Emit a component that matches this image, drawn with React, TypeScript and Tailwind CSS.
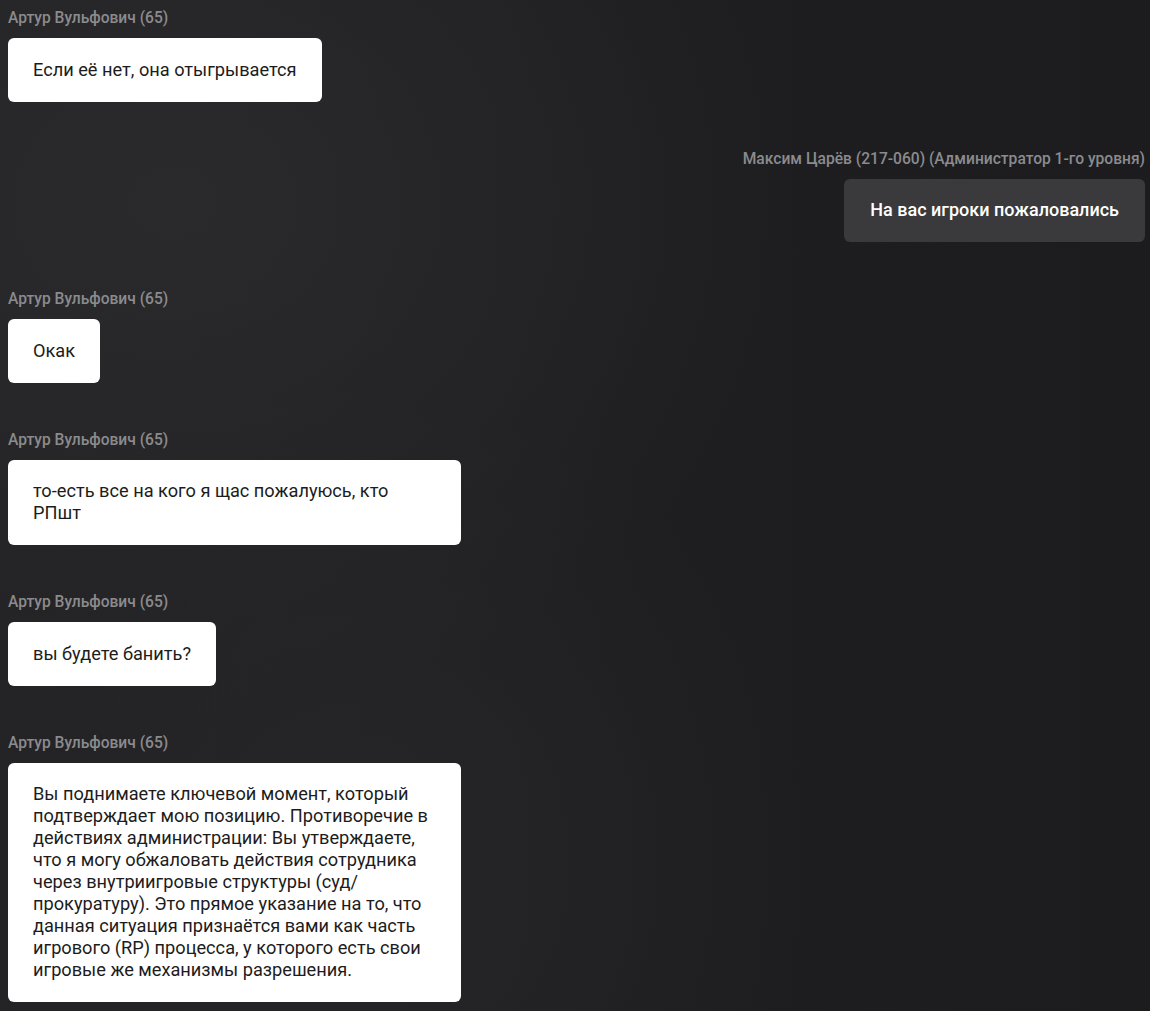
import React from "react";

type Message = {
  author: string;
  text: string;
  own?: boolean;
};

const messages: Message[] = [
  { author: "Артур Вульфович (65)", text: "Если её нет, она отыгрывается" },
  {
    author: "Максим Царёв (217-060) (Администратор 1-го уровня)",
    text: "На вас игроки пожаловались",
    own: true,
  },
  { author: "Артур Вульфович (65)", text: "Окак" },
  { author: "Артур Вульфович (65)", text: "то-есть все на кого я щас пожалуюсь, кто РПшт" },
  { author: "Артур Вульфович (65)", text: "вы будете банить?" },
  {
    author: "Артур Вульфович (65)",
    text:
      "Вы поднимаете ключевой момент, который подтверждает мою позицию. Противоречие в действиях администрации: Вы утверждаете, что я могу обжаловать действия сотрудника через внутриигровые структуры (суд/прокуратуру). Это прямое указание на то, что данная ситуация признаётся вами как часть игрового (RP) процесса, у которого есть свои игровые же механизмы разрешения.",
  },
];

function ChatMessage({ author, text, own }: Message) {
  return (
    <div className={own ? "flex flex-col items-end" : "flex flex-col items-start"}>
      <span className="text-[15.6px] leading-[20px] font-medium text-[#8b8b8e]">{author}</span>
      <div
        className={
          own
            ? "mt-[10px] max-w-[453px] rounded-[6px] bg-[#3a3a3d] px-[26px] py-[20.75px] text-[18px] leading-[22px] font-medium text-white"
            : "mt-[10px] max-w-[453px] rounded-[6px] bg-white px-[25px] py-[20.75px] text-[18.2px] leading-[22px] text-[#1c1c1c]"
        }
      >
        {text}
      </div>
    </div>
  );
}

export default function App() {
  return (
    <div
      className="min-h-[1011px] w-full overflow-hidden bg-[#1f1f22] bg-[radial-gradient(ellipse_at_15%_20%,#2a2a2d_0%,transparent_45%),radial-gradient(ellipse_at_30%_85%,#262628_0%,transparent_40%),linear-gradient(90deg,#232326_0%,#1e1e21_60%,#1c1c1f_100%)]"
      style={{ fontFamily: "Roboto, 'Noto Sans', sans-serif" }}
    >
      <div className="flex flex-col gap-[47px] pl-2 pr-[5px] pt-2">
        {messages.map((m, i) => (
          <ChatMessage key={i} {...m} />
        ))}
      </div>
    </div>
  );
}
